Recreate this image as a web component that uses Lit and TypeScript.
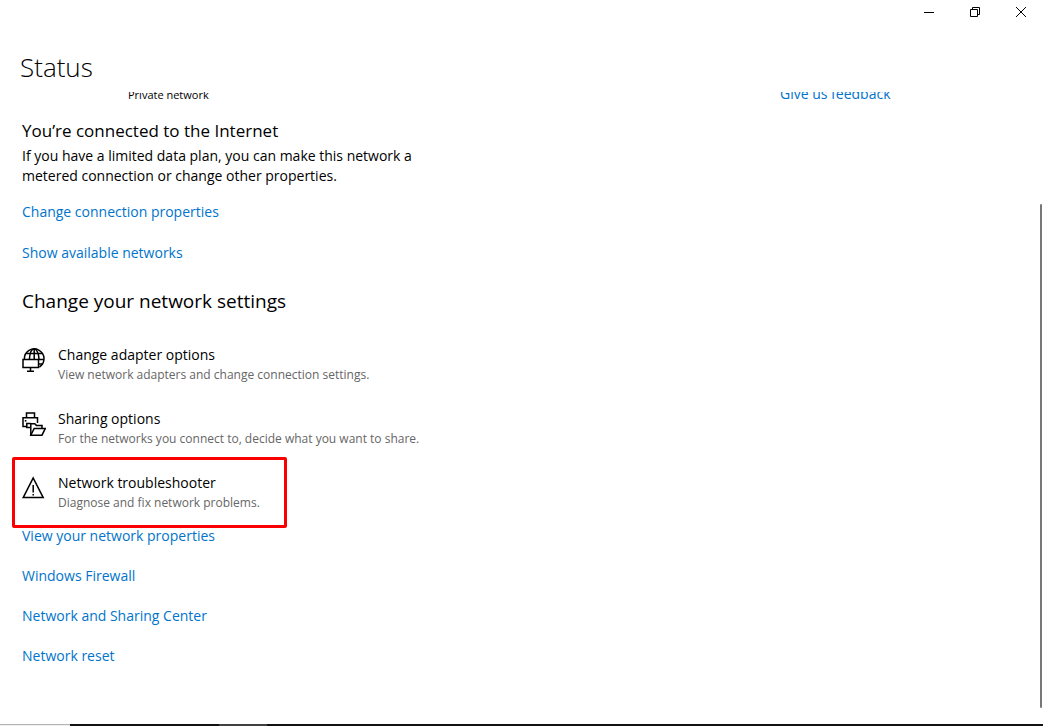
import { LitElement, html, css, svg } from "lit";
import { customElement } from "lit/decorators.js";

const adapterIcon = svg`
  <path d="M2.4 11 A 9.8 9.8 0 1 1 17.4 19" />
  <path d="M7.4 11 C7.8 5 9.8 1 12.2 1 C14.6 1 16.7 5 17 11" />
  <path d="M4.2 5.5 H20.2 M17 11.5 H22 M17 16 H20.4 M12.2 1 V11" />
  <path class="paper" d="M1 11.5 H16.5 V19.5 H1 Z" />
  <path d="M8.5 19.5 V23 M5 23.2 H12" />`;

const sharingIcon = svg`
  <path d="M4.5 5.8 V1 H12.5 V5.8" />
  <path d="M5 14.5 H1 V5.8 H15.5 V11" />
  <path d="M8.8 11.5 H4.8 V15.5 H8" />
  <path class="dot" d="M2.8 8 h1.6 v1.6 h-1.6 Z" />
  <path class="paper" d="M8.8 23.2 V11.8 H12.8 L14.4 13.4 H20 V16.4 L17.5 23.2 Z" />
  <path class="paper" d="M8.8 23.2 L12.2 16.4 H23.3 L20 23.2 Z" />`;

const warningIcon = svg`
  <path d="M11.2 2 L21.2 21.6 H1.2 Z" />
  <path d="M11.2 9 V16.5 M11.2 18 V19.5" />`;

const settings = [
  {
    icon: adapterIcon,
    title: "Change adapter options",
    note: "View network adapters and change connection settings.",
    marked: false,
  },
  {
    icon: sharingIcon,
    title: "Sharing options",
    note: "For the networks you connect to, decide what you want to share.",
    marked: false,
  },
  {
    icon: warningIcon,
    title: "Network troubleshooter",
    note: "Diagnose and fix network problems.",
    marked: true,
  },
];

const related = [
  "View your network properties",
  "Windows Firewall",
  "Network and Sharing Center",
  "Network reset",
];

@customElement("app-root")
export class AppRoot extends LitElement {
  static styles = css`
    :host {
      display: flex;
      flex-direction: column;
      height: 100vh;
      overflow: hidden;
      background: #fff;
      color: #000;
      font-family: "Segoe UI", "Open Sans", "Noto Sans", sans-serif;
      font-size: 14px;
      line-height: 20px;
    }
    h1, h2, h3, p, ul { margin: 0; padding: 0; font-weight: 400; }
    ul { list-style: none; }
    a { color: #0074cc; text-decoration: none; }
    .titlebar { display: flex; justify-content: flex-end; height: 24px; flex: none; margin-right: -1px; }
    .caption {
      width: 46px; height: 24px; padding: 0; border: 0; background: none;
      display: flex; align-items: center; justify-content: center;
    }
    .caption svg { width: 12px; height: 12px; fill: none; stroke: #000; stroke-width: 1; }
    .heading { padding: 23px 20px 5px; font-size: 26px; line-height: 40px; font-weight: 300; flex: none; }
    .body { display: flex; flex: 1; min-height: 0; }
    .scroller { flex: 1; overflow: hidden; display: flex; padding: 0 0 0 22px; }
    .main { flex: 1; margin-top: -7px; }
    .side { width: 260px; flex: none; margin-top: -8px; }
    .profile { padding-left: 106px; font-size: 11px; }
    .state { margin-top: 14px; font-size: 17px; line-height: 24px; }
    .about { max-width: 420px; margin-top: 3px; }
    .actions { display: grid; gap: 21px; margin-top: 16px; }
    .section { margin-top: 24px; font-size: 19px; line-height: 28px; }
    .settings { margin-top: 30px; display: grid; gap: 24px; }
    .setting {
      position: relative; display: flex; gap: 12px; width: fit-content;
      padding: 0; border: 0; background: none; color: inherit;
      font: inherit; text-align: left;
    }
    .setting svg {
      width: 24px; height: 24px; margin-top: 3px; flex: none;
      fill: none; stroke: #000; stroke-width: 1.5;
    }
    .setting .paper { fill: #fff; }
    .setting .dot { fill: #000; stroke: none; }
    .text { display: grid; }
    .note { color: #666; font-size: 12px; }
    .mark {
      position: absolute; inset: -16px -27px -15px -10px;
      border: 3px solid #fa0000; border-radius: 2px; pointer-events: none;
    }
    .related { display: grid; gap: 20px; margin-top: 13px; }
    .scrollbar { width: 3px; flex: none; padding: 112px 0 16px; display: flex; }
    .thumb { width: 2px; background: #777; border-radius: 1px; }
    .taskbar { display: flex; height: 2px; flex: none; background: #111; }
    .search { width: 70px; background: #f0f0f0; border-top: 1px solid #b4b4b4; box-sizing: border-box; }
    .running { width: 48px; margin-left: 149px; background: #404040; }
  `;

  render() {
    return html`
      <header class="titlebar">
        <button class="caption" aria-label="Minimize">
          <svg viewBox="0 0 12 12"><path d="M1 6.5H11" /></svg>
        </button>
        <button class="caption" aria-label="Restore">
          <svg viewBox="0 0 12 12"><path d="M1.5 3.5H8.5V10.5H1.5Z M3.5 3.5V1.5H10.5V8.5H8.5" /></svg>
        </button>
        <button class="caption" aria-label="Close">
          <svg viewBox="0 0 12 12"><path d="M1 1L11 11M11 1L1 11" /></svg>
        </button>
      </header>
      <h1 class="heading">Status</h1>
      <div class="body">
        <div class="scroller">
          <main class="main">
            <p class="profile">Private network</p>
            <h3 class="state">You’re connected to the Internet</h3>
            <p class="about">
              If you have a limited data plan, you can make this network a<br />metered
              connection or change other properties.
            </p>
            <div class="actions">
              <div><a href="#">Change connection properties</a></div>
              <div><a href="#">Show available networks</a></div>
            </div>
            <h2 class="section">Change your network settings</h2>
            <div class="settings">
              ${settings.map(
                (s) => html`<button class="setting">
                  <svg viewBox="0 0 24 24" aria-hidden="true">${s.icon}</svg>
                  <span class="text">
                    <span>${s.title}</span>
                    <span class="note">${s.note}</span>
                  </span>
                  ${s.marked ? html`<span class="mark"></span>` : null}
                </button>`
              )}
            </div>
            <ul class="related">
              ${related.map((r) => html`<li><a href="#">${r}</a></li>`)}
            </ul>
          </main>
          <aside class="side"><a href="#">Give us feedback</a></aside>
        </div>
        <div class="scrollbar"><div class="thumb"></div></div>
      </div>
      <footer class="taskbar">
        <div class="search"></div>
        <div class="running"></div>
      </footer>
    `;
  }
}
